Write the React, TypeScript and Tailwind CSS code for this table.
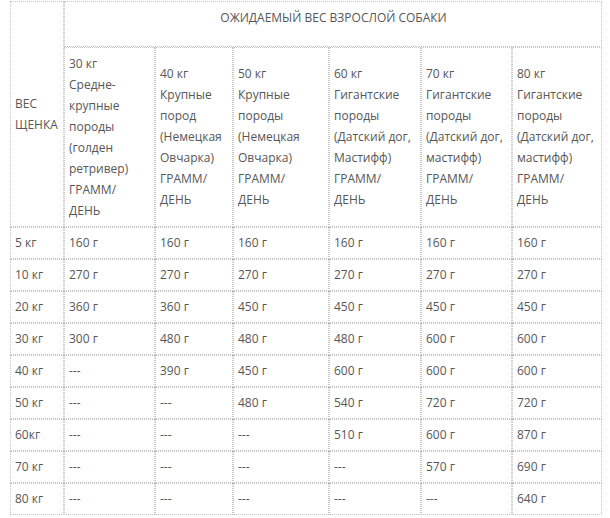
import React from "react";

const heads: string[][] = [
  ["30 кг", "Средне-", "крупные", "породы", "(голден", "ретривер)", "ГРАММ/", "ДЕНЬ"],
  ["40 кг", "Крупные", "пород", "(Немецкая", "Овчарка)", "ГРАММ/", "ДЕНЬ"],
  ["50 кг", "Крупные", "породы", "(Немецкая", "Овчарка)", "ГРАММ/", "ДЕНЬ"],
  ["60 кг", "Гигантские", "породы", "(Датский дог,", "Мастифф)", "ГРАММ/", "ДЕНЬ"],
  ["70 кг", "Гигантские", "породы", "(Датский дог,", "мастифф)", "ГРАММ/", "ДЕНЬ"],
  ["80 кг", "Гигантские", "породы", "(Датский дог,", "мастифф)", "ГРАММ/", "ДЕНЬ"],
];

const rows: [string, string[]][] = [
  ["5 кг", ["160 г", "160 г", "160 г", "160 г", "160 г", "160 г"]],
  ["10 кг", ["270 г", "270 г", "270 г", "270 г", "270 г", "270 г"]],
  ["20 кг", ["360 г", "360 г", "450 г", "450 г", "450 г", "450 г"]],
  ["30 кг", ["300 г", "480 г", "480 г", "480 г", "600 г", "600 г"]],
  ["40 кг", ["---", "390 г", "450 г", "600 г", "600 г", "600 г"]],
  ["50 кг", ["---", "---", "480 г", "540 г", "720 г", "720 г"]],
  ["60кг", ["---", "---", "---", "510 г", "600 г", "870 г"]],
  ["70 кг", ["---", "---", "---", "---", "570 г", "690 г"]],
  ["80 кг", ["---", "---", "---", "---", "---", "640 г"]],
];

const cell =
  "border border-dotted border-[#c4c4c4] pl-[4px] pr-[3px] pt-[4px] pb-[5px] align-middle text-left font-normal";

export default function App() {
  return (
    <div className="bg-white min-h-[518px] pt-[1px] pl-[10px] text-[12px] leading-[21px] text-[#575757] [font-family:'Open_Sans','Noto_Sans',sans-serif]">
      <table className="w-[592px] table-fixed border-separate border-spacing-0">
        <colgroup>
          <col className="w-[54px]" />
          <col className="w-[91px]" />
          <col className="w-[78px]" />
          <col className="w-[96px]" />
          <col className="w-[92px]" />
          <col className="w-[91px]" />
          <col className="w-[90px]" />
        </colgroup>
        <tbody>
          <tr className="h-[46px]">
            <td rowSpan={2} className={cell}>
              ВЕС
              <br />
              ЩЕНКА
            </td>
            <td colSpan={6} className={`${cell} !text-center !align-top !pt-[5px]`}>
              ОЖИДАЕМЫЙ ВЕС ВЗРОСЛОЙ СОБАКИ
            </td>
          </tr>
          <tr className="h-[180px]">
            {heads.map((h, i) => (
              <td key={i} className={`${cell} whitespace-nowrap`}>
                {h.map((l, j) => (
                  <div key={j}>{l}</div>
                ))}
              </td>
            ))}
          </tr>
          {rows.map(([w, vals]) => (
            <tr key={w} className="h-[32px]">
              <td className={cell}>{w}</td>
              {vals.map((v, i) => (
                <td key={i} className={cell}>
                  {v}
                </td>
              ))}
            </tr>
          ))}
        </tbody>
      </table>
    </div>
  );
}
